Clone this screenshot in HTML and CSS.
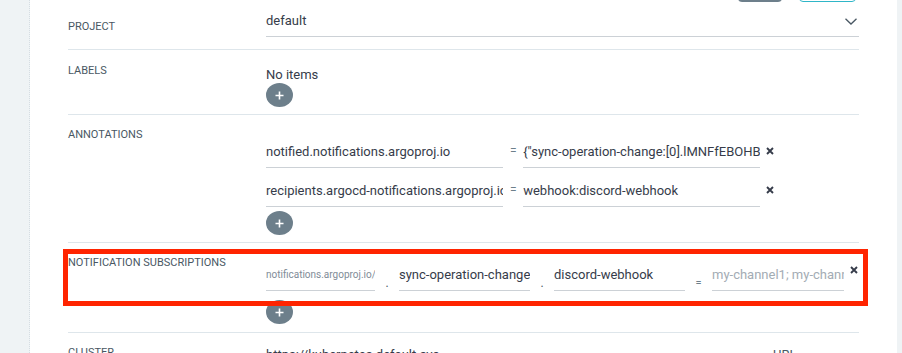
FILE: index.html
```html
<!DOCTYPE html>
<html lang="en">
<head>
    <meta charset="UTF-8">
    <meta name="viewport" content="width=device-width, initial-scale=1.0">
    <title>Application Summary</title>
    <link rel="stylesheet" href="styles.css">
</head>
<body>
    <div class="layout">
        <div class="side side-left"></div>

        <div class="panel">
            <div class="toolbar">
                <div class="tb-btn tb-btn-gray"></div>
                <div class="tb-btn tb-btn-outline"></div>
            </div>

            <div class="row row-project">
                <div class="row-label">Project</div>
                <div class="row-value">
                    <div class="select">
                        <span>default</span>
                        <svg class="chevron" width="12" height="7" viewBox="0 0 12 7">
                            <polyline points="0.5,0.8 6,6 11.5,0.8" fill="none" stroke="#495763" stroke-width="1.3"/>
                        </svg>
                    </div>
                </div>
            </div>

            <div class="row row-labels">
                <div class="row-label">Labels</div>
                <div class="row-value">
                    <div class="no-items">No items</div>
                    <button class="add-btn">
                        <svg width="9" height="9" viewBox="0 0 9 9"><path d="M4.5 0.5v8M0.5 4.5h8" stroke="#fff" stroke-width="1.6"/></svg>
                    </button>
                </div>
            </div>

            <div class="row row-annotations">
                <div class="row-label">Annotations</div>
                <div class="row-value">
                    <div class="kv-entry">
                        <input class="field kv-key" value="notified.notifications.argoproj.io">
                        <span class="eq">=</span>
                        <input class="field kv-val" value='{"sync-operation-change:[0].lMNFfEBOHBfQYhmAxNvX0ySdNQk":{"discord-webhook":1}}'>
                        <span class="remove">
                            <svg width="8" height="8" viewBox="0 0 8 8"><path d="M1 1l6 6M7 1l-6 6" stroke="#363c4a" stroke-width="1.9"/></svg>
                        </span>
                    </div>
                    <div class="kv-entry">
                        <input class="field kv-key" value="recipients.argocd-notifications.argoproj.io">
                        <span class="eq">=</span>
                        <input class="field kv-val" value="webhook:discord-webhook">
                        <span class="remove">
                            <svg width="8" height="8" viewBox="0 0 8 8"><path d="M1 1l6 6M7 1l-6 6" stroke="#363c4a" stroke-width="1.9"/></svg>
                        </span>
                    </div>
                    <button class="add-btn add-btn-list">
                        <svg width="9" height="9" viewBox="0 0 9 9"><path d="M4.5 0.5v8M0.5 4.5h8" stroke="#fff" stroke-width="1.6"/></svg>
                    </button>
                </div>
            </div>

            <div class="row row-subscriptions">
                <div class="row-label">Notification Subscriptions</div>
                <div class="row-value">
                    <div class="sub-entry">
                        <input class="field sub-prefix" value="notifications.argoproj.io/" readonly>
                        <span class="sub-sep">.</span>
                        <input class="field sub-trigger" value="sync-operation-change">
                        <span class="sub-sep">.</span>
                        <input class="field sub-service" value="discord-webhook">
                        <span class="sub-sep sub-eq">=</span>
                        <input class="field sub-channel" placeholder="my-channel1; my-channel2">
                        <span class="remove remove-sub">
                            <svg width="8" height="8" viewBox="0 0 8 8"><path d="M1 1l6 6M7 1l-6 6" stroke="#363c4a" stroke-width="1.9"/></svg>
                        </span>
                    </div>
                    <button class="add-btn add-btn-sub">
                        <svg width="9" height="9" viewBox="0 0 9 9"><path d="M4.5 0.5v8M0.5 4.5h8" stroke="#fff" stroke-width="1.6"/></svg>
                    </button>
                </div>
                <div class="highlight"></div>
            </div>

            <div class="row row-cluster">
                <div class="row-label">Cluster</div>
                <div class="row-value cluster-value">
                    <span class="cluster-url">https://kubernetes.default.svc</span>
                    <span class="cluster-type">URL <span class="caret">&#9662;</span></span>
                </div>
            </div>
        </div>

        <div class="side side-right"></div>
    </div>
</body>
</html>
```

FILE: styles.css
```css
body {
    margin: 0;
    height: 353px;
    overflow: hidden;
    font-family: Roboto, "Liberation Sans", sans-serif;
    font-size: 13px;
    color: #363c4a;
    background: #eff3f5;
}
.layout {
    display: flex;
    height: 353px;
}
.side {
    background: #eff3f5;
}
.side-left {
    width: 29px;
    border-right: 1px dotted #d5dde3;
}
.side-right {
    width: 5px;
}
.panel {
    flex: 1;
    background: #fff;
    padding: 0 38px;
    overflow: hidden;
}
.toolbar {
    display: flex;
    justify-content: flex-end;
    height: 2px;
    overflow: hidden;
    padding-right: 3px;
}
.tb-btn {
    height: 30px;
    margin-top: -28px;
    border-radius: 4px;
    box-sizing: border-box;
}
.tb-btn-gray {
    width: 44px;
    background: #6d7f8b;
}
.tb-btn-outline {
    width: 57px;
    margin-left: 17px;
    border: 1px solid #2fb6c8;
}
.row {
    display: flex;
    position: relative;
    border-bottom: 1px solid #dee6eb;
}
.row-label {
    width: 198px;
    flex-shrink: 0;
    padding-top: 13px;
    font-size: 11px;
    line-height: 14px;
    text-transform: uppercase;
    color: #495763;
}
.row-value {
    flex: 1;
    min-width: 0;
}
.row-project .row-label { padding-top: 18px; }
.row-project .row-value { padding: 9px 0 12px; }
.row-labels .row-label { padding-top: 14px; }
.row-labels .row-value { padding: 17px 0 7px; }
.row-annotations .row-value { padding: 26px 0 7px; }
.row-subscriptions .row-value { padding: 21px 0 8px; }
.row-cluster .row-value { padding-top: 12px; }

.select {
    display: flex;
    justify-content: space-between;
    align-items: center;
    height: 26px;
    box-sizing: border-box;
    line-height: 20px;
    padding-bottom: 5px;
    border-bottom: 1px solid #ccd1d6;
}
.chevron {
    margin-right: 2px;
}
.no-items {
    line-height: 16px;
}
.add-btn {
    display: flex;
    align-items: center;
    justify-content: center;
    width: 27px;
    height: 24px;
    padding: 0;
    border: none;
    border-radius: 50%;
    background: #6d7f8b;
    cursor: pointer;
}
.add-btn-list { margin-top: 4px; }
.add-btn-sub { margin-top: 9px; }

.field {
    display: block;
    height: 27px;
    box-sizing: border-box;
    padding: 0 0 6px;
    margin: 0;
    border: none;
    border-bottom: 1px solid #ccd1d6;
    background: transparent;
    font: inherit;
    line-height: 20px;
    color: #363c4a;
    outline: none;
}
.field::placeholder {
    color: #a3acb4;
}
.kv-entry {
    display: flex;
    align-items: flex-start;
    margin-bottom: 12px;
}
.kv-entry + .kv-entry {
    margin-bottom: 0;
}
.kv-key,
.kv-val {
    width: 40%;
}
.eq {
    width: 20px;
    text-align: center;
    line-height: 20px;
    font-size: 12px;
    color: #6d7f8b;
}
.remove {
    display: flex;
    align-items: center;
    height: 20px;
    margin-left: 6px;
}
.sub-entry {
    display: flex;
    align-items: flex-start;
}
.sub-prefix {
    width: 109px;
    font-size: 10px;
    color: #7f8c97;
}
.sub-trigger,
.sub-service {
    width: 131px;
}
.sub-channel {
    width: 132px;
}
.sub-sep {
    width: 24px;
    align-self: flex-end;
    text-align: center;
    font-size: 12px;
    line-height: 12px;
    padding-bottom: 2px;
    color: #495763;
}
.sub-eq {
    width: 27px;
    font-size: 11px;
    color: #6d7f8b;
}
.remove-sub {
    height: 8px;
    margin: 2px 0 0 6px;
}
.highlight {
    position: absolute;
    left: -5px;
    top: 6px;
    width: 805px;
    height: 57px;
    box-sizing: border-box;
    border: 5px solid #ff2400;
    pointer-events: none;
}
.cluster-value {
    display: flex;
    justify-content: space-between;
    line-height: 20px;
}
.cluster-type {
    width: 86px;
    color: #495763;
}
.caret {
    font-size: 10px;
}
```
